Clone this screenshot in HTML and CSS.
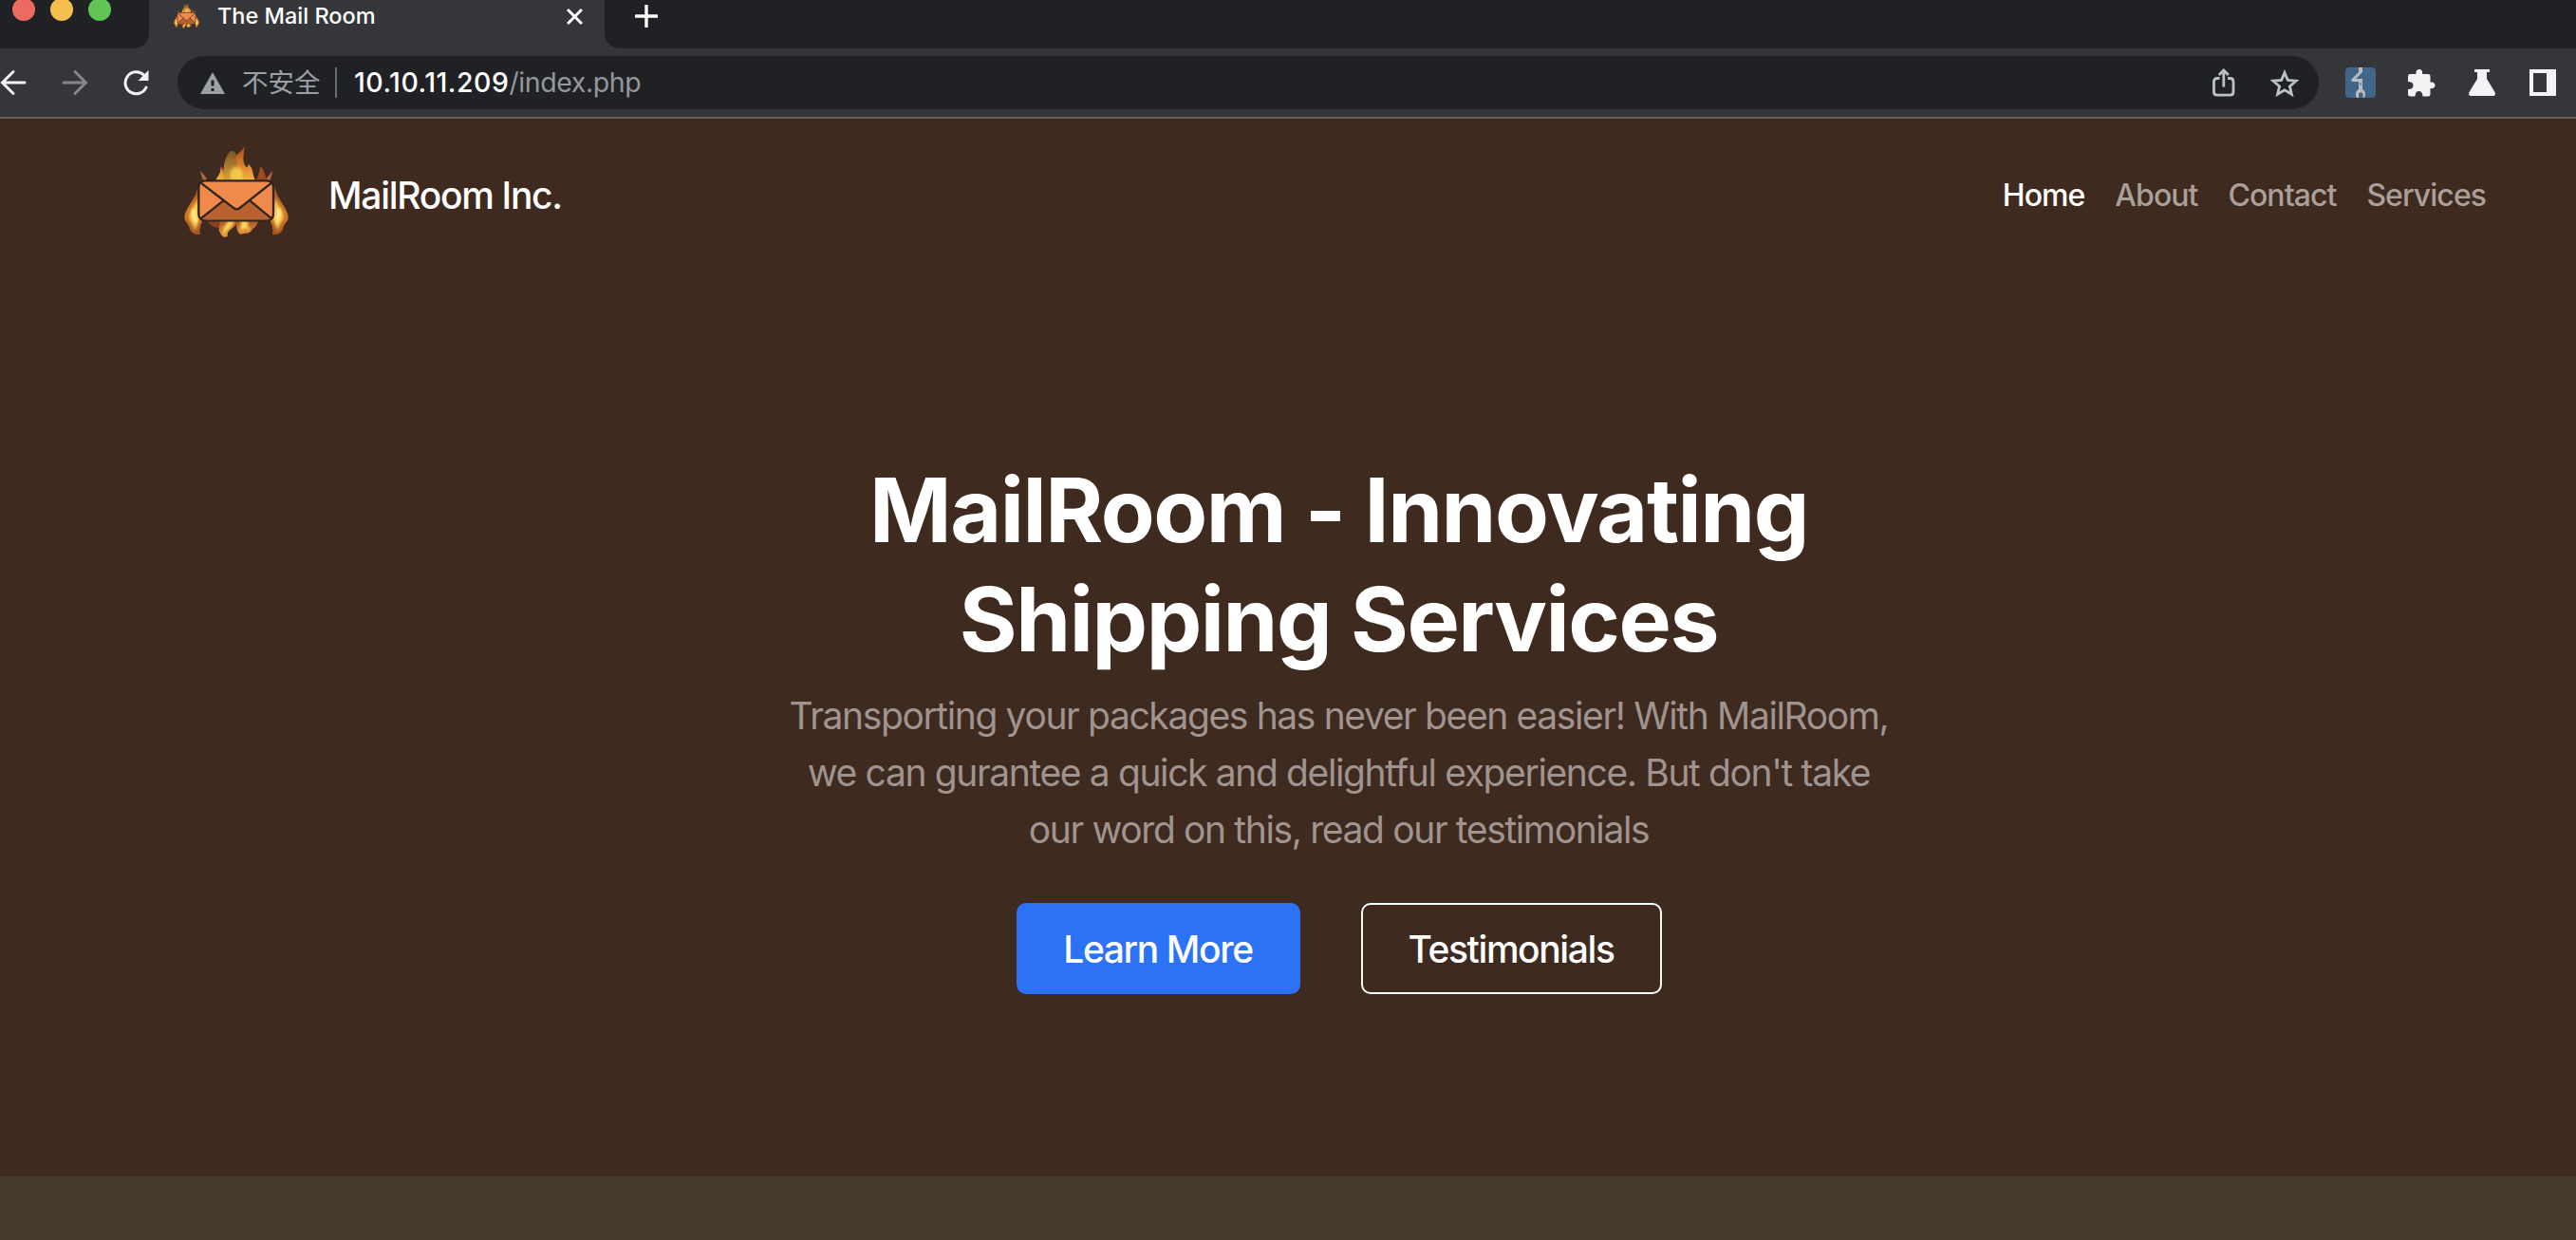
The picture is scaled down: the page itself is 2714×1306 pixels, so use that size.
FILE: index.html
```html
<!DOCTYPE html>
<html lang="en">
<head>
<meta charset="utf-8">
<title>The Mail Room</title>
<link rel="stylesheet" href="styles.css">
</head>
<body>
<svg class="defs" width="0" height="0" aria-hidden="true">
  <defs>
    <linearGradient id="flameTop" x1="0" y1="0" x2="0" y2="1">
      <stop offset="0" stop-color="#a54a1c"/><stop offset=".5" stop-color="#d97c2c"/><stop offset="1" stop-color="#f3b842"/>
    </linearGradient>
    <linearGradient id="flameDim" x1="0" y1="0" x2="0" y2="1">
      <stop offset="0" stop-color="#7a5426"/><stop offset="1" stop-color="#e0a43a"/>
    </linearGradient>
    <linearGradient id="flameSide" x1="0" y1="0" x2="0" y2="1">
      <stop offset="0" stop-color="#a5501f"/><stop offset=".55" stop-color="#d07c2b"/><stop offset="1" stop-color="#a3521f"/>
    </linearGradient>
    <linearGradient id="flameLow" x1="0" y1="0" x2="0" y2="1">
      <stop offset="0" stop-color="#a8521f"/><stop offset="1" stop-color="#ee9d3c"/>
    </linearGradient>
    <filter id="soft"><feGaussianBlur stdDeviation="4"/></filter>
    <symbol id="logo" viewBox="0 0 420 330">
      <path fill="#a0491f" d="M150 125C146 104 160 92 158 74C168 84 174 96 172 125ZM265 125C280 106 278 92 284 74C296 90 299 108 306 125Z"/>
      <path fill="#b0683d" d="M93 90C102 100 110 106 115 118L103 124C99 112 96 104 93 90ZM322 90C312 101 305 108 301 118L313 122C316 110 320 104 322 90Z"/>
      <path fill="url(#flameTop)" d="M176 124C180 90 200 70 203 50C206 38 222 32 234 12C230 34 228 48 230 60C234 84 247 80 244 68C262 80 256 96 268 124ZM140 124C146 105 158 104 158 78C166 92 168 108 178 124Z"/>
      <path fill="url(#flameDim)" d="M168 124C162 86 170 40 190 27C202 26 208 34 208 50C206 66 214 90 220 124Z"/>
      <ellipse cx="207" cy="102" rx="20" ry="24" fill="#fbd44d" opacity=".8" filter="url(#soft)"/>
      <g id="side-flame">
        <path fill="url(#flameSide)" d="M86 140C80 176 48 202 43 234C41 252 58 256 59 272C66 290 82 292 93 291C88 268 98 254 104 240L100 180Z"/>
        <path fill="#f9c748" filter="url(#soft)" d="M86 178C70 204 60 218 58 236C60 252 72 254 76 280C82 266 82 250 96 238Z"/>
        <path fill="#fff0a0" filter="url(#soft)" d="M70 208C58 232 76 240 80 264C88 244 74 230 78 212Z"/>
      </g>
      <use href="#side-flame" transform="translate(414 0) scale(-1 1)"/>
      <path fill="#8a421e" d="M112 246L160 246L156 269C136 272 124 260 112 246Z"/>
      <path fill="url(#flameLow)" d="M152 246C162 266 144 268 156 286C162 300 172 302 179 296C178 276 192 276 204 262L208 246ZM202 246C210 262 204 280 220 291C232 284 246 294 258 274C268 268 276 256 276 246Z"/>
      <path fill="#fbd858" filter="url(#soft)" d="M182 246C176 262 160 270 166 292C176 274 198 270 200 246ZM222 246C224 264 214 270 224 282C230 264 240 276 252 280C246 268 240 264 244 246Z"/>
      <rect x="88" y="121" width="236" height="126" rx="20" fill="#f08a4b" stroke="#31241d" stroke-width="7"/>
      <path fill="#b9622f" d="M97 241L166 185L199 210Q208 216 217 210L250 185L316 241Q312 244 306 244L108 244Q100 244 97 241Z"/>
      <path fill="none" stroke="#31241d" stroke-width="7" d="M94 127L198 207Q208 215 218 207L319 127M94 241L166 184M319 241L250 184"/>
    </symbol>
  </defs>
</svg>

<header class="browser">
  <div class="tab-strip">
    <div class="lights"><div class="lights-inner"><span class="light red"></span><span class="light yellow"></span><span class="light green"></span></div></div>
    <div class="tab">
      <svg class="favicon" viewBox="42 10 330 292" preserveAspectRatio="none"><use href="#logo" width="420" height="330"/></svg>
      <span class="tab-title">The Mail Room</span>
      <svg class="tab-close" viewBox="0 0 16 16"><path d="M1 1L15 15M15 1L1 15"/></svg>
    </div>
    <div class="strip-rest"><svg class="plus" viewBox="0 0 24 24"><path d="M12 1V23M1 12H23"/></svg></div>
  </div>
  <div class="toolbar">
    <svg class="nav-icon back" viewBox="0 0 28 28"><path d="M26 14H3M14 2.500L2.500 14L14 25.500"/></svg>
    <svg class="nav-icon forward" viewBox="0 0 28 28"><path d="M2 14H25M14 2.500L25.500 14L14 25.500"/></svg>
    <svg class="nav-icon reload" viewBox="0 0 28 28"><path d="M25 19A11.500 11.500 0 1 1 22.500 6"/><path class="solid" d="M27.500 1V12H16.500Z"/></svg>
    <div class="omnibox">
      <svg class="warn" viewBox="0 0 26 23"><path d="M13 0L26 23H0Z"/><path class="bang" d="M11.500 8.500H14.500V14.500H11.500ZM11.500 17H14.500V20H11.500Z"/></svg>
      <span class="insecure">不安全</span>
      <span class="divider"></span>
      <span class="url"><span class="host">10.10.11.209</span><span class="path">/index.php</span></span>
      <svg class="share" viewBox="0 0 24 30"><path d="M7.500 10.500H5Q1.500 10.500 1.500 14V25Q1.500 28.200 5 28.200H18.500Q22 28.200 22 25V14Q22 10.500 18.500 10.500H16M11.800 19.500V2M6.800 7L11.800 2L16.800 7"/></svg>
      <svg class="star" viewBox="0 0 30 29"><path d="M15 3.500L18.300 11.400L27 12.200L20.400 17.900L22.400 26.300L15 21.800L7.600 26.300L9.600 17.900L3 12.200L11.700 11.400Z"/></svg>
    </div>
    <svg class="ext wrench" viewBox="0 0 32 32"><rect width="32" height="32" rx="4" fill="#42658a"/><g fill="#b9bcc0"><path d="M14 0H18V5L11 12H18V15H7L6 13L14 5Z"/><path d="M14 15H18V23C21 24.500 22 28 20 32H18.500V27.500L16.500 26L14 27.500V32H12C10 28 11 24.500 14 23Z"/></g><path d="M16 16V19" stroke="#42658a"/></svg>
    <svg class="ext puzzle" viewBox="0 0 29 29"><path d="M2.500 5H8.500C8 2 9.500 0 12 0S15.500 2 15 5H21Q23.500 5 23.500 7.500V13.500C26.500 13 28.500 14.500 28.500 17S26.500 20.500 23.500 20V26Q23.500 28.500 21 28.500H15.500C15.500 25 14 23 11.500 23S7.500 25 7.500 28.500H2.500Q0 28.500 0 26V21C3.500 21 5.500 19.500 5.500 17S3.500 13 0 13V7.500Q0 5 2.500 5Z"/></svg>
    <svg class="ext flask" viewBox="0 0 28 28"><path d="M6 0H22V3H19V10L27.500 24Q29 28 25 28H3Q-1 28 .5 24L9 10V3H6Z"/></svg>
    <svg class="ext panel" viewBox="0 0 28 28"><path fill-rule="evenodd" d="M0 0H28V28H0ZM4 4V24H18V4Z"/></svg>
  </div>
</header>

<main>
  <nav class="navbar">
    <a class="brand"><svg class="logo" viewBox="0 0 420 330"><use href="#logo" width="420" height="330"/></svg><span class="brand-name">MailRoom Inc.</span></a>
    <ul class="links">
      <li class="active">Home</li><li>About</li><li>Contact</li><li>Services</li>
    </ul>
  </nav>
  <section class="hero">
    <h1>MailRoom - Innovating<br>Shipping Services</h1>
    <p>Transporting your packages has never been easier! With MailRoom,<br>we can gurantee a quick and delightful experience. But don't take<br>our word on this, read our testimonials</p>
    <div class="actions"><a class="btn primary">Learn More</a><a class="btn outline">Testimonials</a></div>
  </section>
  <section class="next"></section>
</main>
</body>
</html>
```
FILE: styles.css
```css
* { box-sizing: border-box; }
body {
  margin: 0;
  width: 2714px;
  height: 1306px;
  overflow: hidden;
  display: flex;
  flex-direction: column;
  background: #3f2a20;
  color: #fff;
  font-family: Inter, "Noto Sans CJK SC", sans-serif;
}
svg { display: block; flex: none; }
.defs { position: absolute; }
.browser { height: 125px; background: #35363a; border-bottom: 2px solid #615d5c; }

.tab-strip { height: 51px; display: flex; }
.lights { width: 157px; background: #202124; border-bottom-right-radius: 16px; overflow: hidden; }
.lights-inner { display: flex; gap: 16px; padding-left: 13px; margin-top: -2px; }
.light { width: 24px; height: 24px; border-radius: 50%; }
.red { background: #ed6a5e; }
.yellow { background: #f4bf4f; }
.green { background: #61c554; }
.tab { width: 480px; display: flex; padding-left: 26px; }
.favicon { width: 27px; height: 27px; margin-top: 3px; }
.tab-title { width: 394px; padding-left: 19px; font-size: 23.5px; line-height: 34px; font-weight: 450; }
.tab-close { width: 17px; height: 17px; margin: 9px 0 0 -7px; fill: none; stroke: #fff; stroke-width: 2.8; }
.strip-rest { flex: 1; background: #202124; border-bottom-left-radius: 16px; padding: 5px 0 0 32px; }
.plus { width: 24px; height: 24px; fill: none; stroke: #fff; stroke-width: 3.4; stroke-linecap: round; }

.toolbar { height: 72px; display: flex; align-items: center; }
.nav-icon { width: 28px; height: 28px; fill: none; stroke: #f1f3f4; stroke-width: 3; stroke-linecap: round; }
.forward { margin-left: 37px; stroke: #85878b; }
.reload { margin-left: 36px; }
.reload .solid { fill: #f1f3f4; stroke: none; }
.omnibox { width: 2256px; height: 56px; margin-left: 30px; border-radius: 28px; background: #202124; display: flex; align-items: center; padding-left: 24px; }
.warn { width: 26px; height: 23px; fill: #9aa0a6; }
.bang { fill: #202124; }
.insecure { width: 116px; padding-left: 18px; font-size: 27.5px; line-height: 56px; color: #9aa0a6; white-space: nowrap; }
.divider { width: 2px; height: 32px; background: #6a6d71; }
.url { flex: 1; padding-left: 18px; font-size: 28.5px; line-height: 58px; white-space: nowrap; }
.host { letter-spacing: .5px; font-weight: 450; }
.path { letter-spacing: -.4px; color: #94979b; }
.share, .star { fill: none; stroke: #bdc1c6; stroke-width: 2.8; }
.share { width: 24px; height: 30px; }
.star { width: 30px; height: 29px; margin: 0 21px 0 37px; }
.ext { fill: #f1f3f4; }
.wrench { width: 32px; height: 32px; margin-left: 28px; }
.puzzle { width: 29px; height: 29px; margin-left: 34px; }
.flask { width: 28px; height: 28px; margin-left: 35px; }
.panel { width: 28px; height: 28px; margin-left: 36px; }

.navbar { height: 160px; display: flex; justify-content: space-between; align-items: center; padding: 0 95px 0 180px; }
.brand { display: flex; align-items: center; }
.logo { width: 140px; height: 110px; }
.brand-name { margin-left: 26px; padding-top: 2px; font-size: 39px; line-height: 60px; font-weight: 450; letter-spacing: -1.3px; }
.links { display: flex; gap: 32px; margin: 0; padding: 2px 0 0; list-style: none; font-size: 32px; line-height: 48px; font-weight: 450; letter-spacing: -.96px; color: #ab9f9a; }
.active { color: #fff; }

.hero { height: 954px; padding: 195px 0 0 107px; text-align: center; }
h1 { margin: 0; font-size: 93px; line-height: 115px; font-weight: 700; letter-spacing: -1.45px; }
p { margin: 14px 0 0; font-size: 39px; line-height: 60px; letter-spacing: -1.37px; color: #9f948f; }
.actions { display: flex; justify-content: center; gap: 64px; margin-top: 47px; }
.btn { height: 96px; border: 2px solid #fff; border-radius: 10px; font-size: 39px; line-height: 94px; font-weight: 450; letter-spacing: -1.4px; white-space: nowrap; }
.primary { width: 299px; background: #2c72f5; border-color: #2c72f5; }
.outline { width: 317px; }
.next { height: 67px; background: #45392b; }
```
